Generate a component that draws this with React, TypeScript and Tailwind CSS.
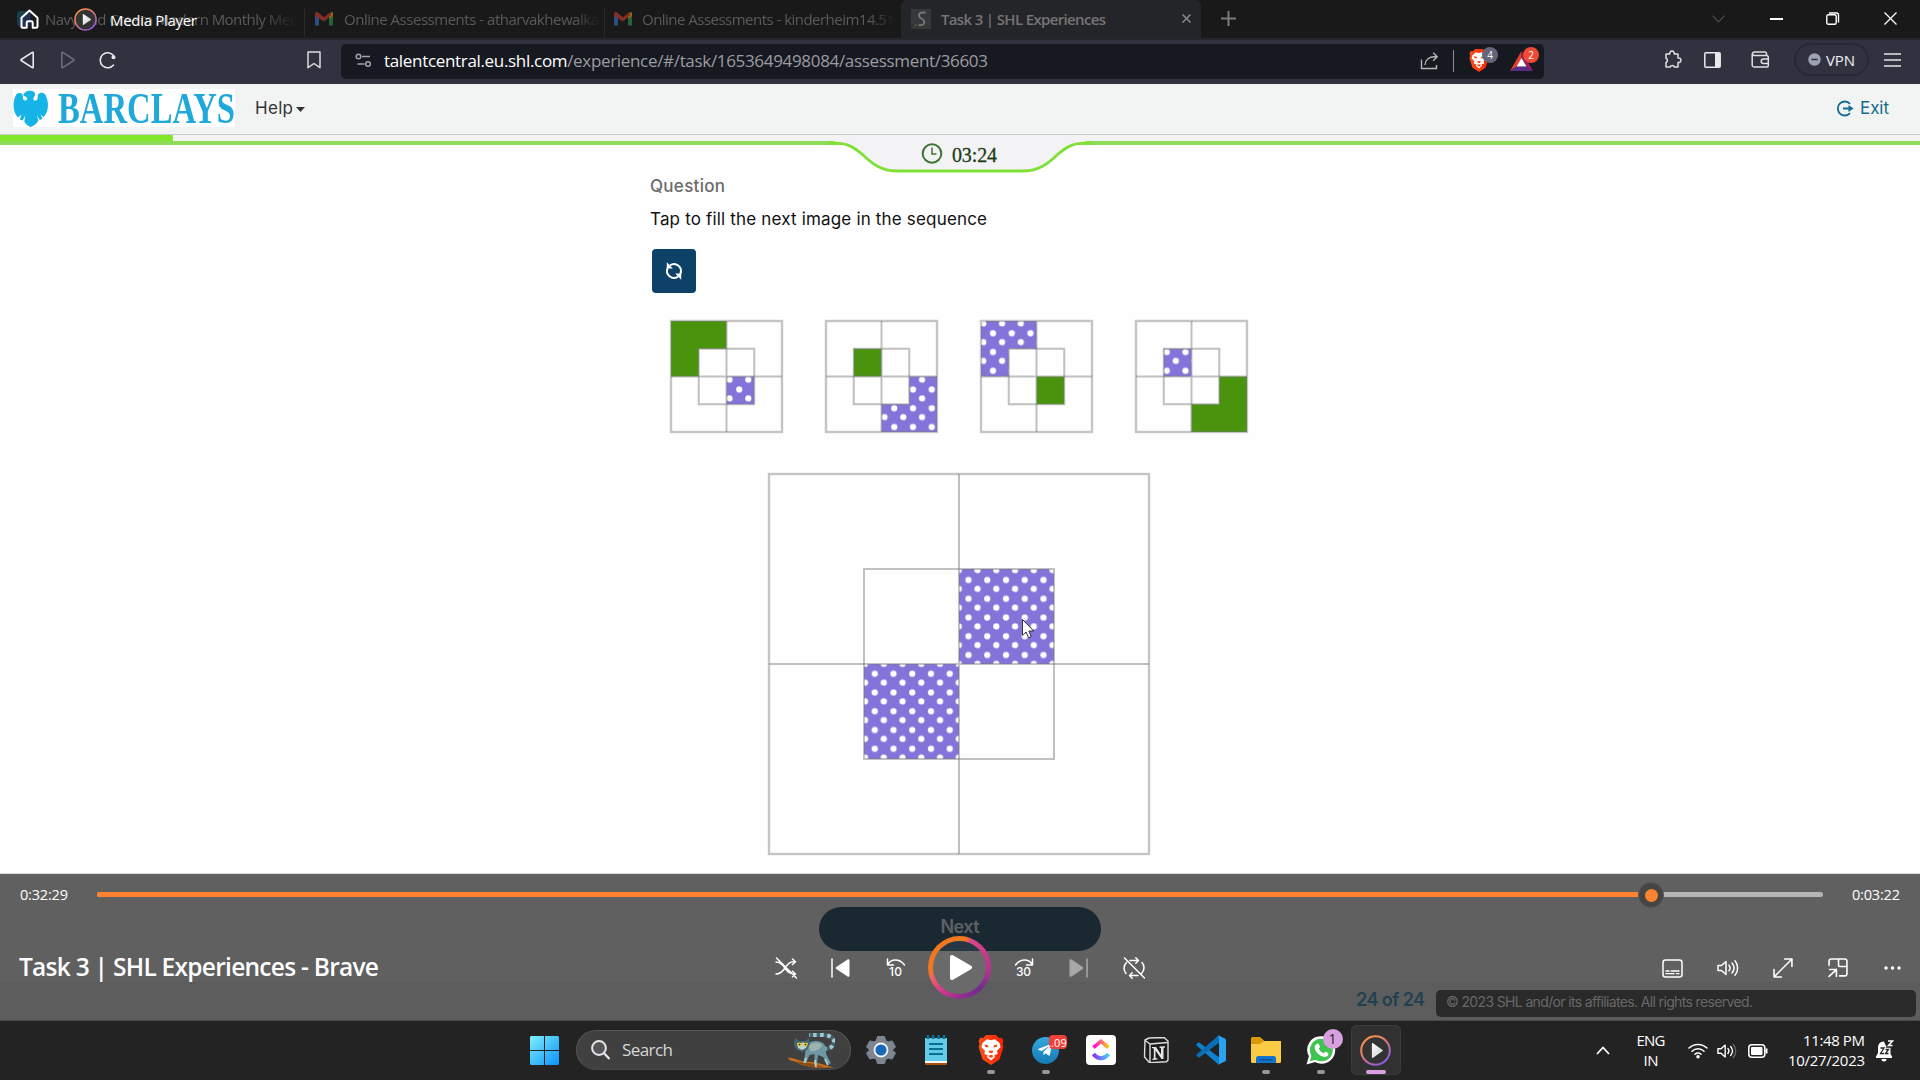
import { useLayoutEffect, useRef, type ReactNode } from "react";
import { FaTelegramPlane } from "react-icons/fa";

/* Text set to a fixed measure: tracking (or horizontal scale) is adjusted to fill it. */
function Fit({ w, text, className = "", stretch = false, children }: { w: number; text?: string; className?: string; stretch?: boolean; children?: ReactNode }) {
  const ref = useRef<HTMLSpanElement>(null);
  useLayoutEffect(() => {
    const el = ref.current;
    if (!el) return;
    const adjust = () => {
      el.style.letterSpacing = "0px";
      el.style.transform = "none";
      const natural = el.getBoundingClientRect().width;
      const n = (el.textContent ?? "").length;
      if (stretch) el.style.transform = `scaleX(${w / natural})`;
      else el.style.letterSpacing = `${(w - natural) / Math.max(1, n - 1)}px`;
    };
    adjust();
    document.fonts?.ready.then(adjust);
  }, [w, stretch]);
  return (
    <span className={`block shrink-0 whitespace-pre ${className}`} style={{ width: w }}>
      <span ref={ref} className="inline-block origin-left">{text ?? children}</span>
    </span>
  );
}

const SEGOE = "font-['Open_Sans','Noto_Sans',sans-serif]";
const NOVA = "font-['Inter','Lato',sans-serif]";

function Gmail() {
  return (
    <svg width="18" height="14" viewBox="0 0 18 14" className="shrink-0 opacity-50">
      <path d="M0 2v11.5h4V6z" fill="#4285f4" />
      <path d="M18 2v11.5h-4V6z" fill="#34a853" />
      <path d="M14 1.5 18 0v4l-4 3z" fill="#fbbc04" />
      <path d="M0 .5 2.5 0 9 5.2 15.5 0 16 3.5 9 9.5 0 4z" fill="#ea4335" />
    </svg>
  );
}

function MediaLogo({ size }: { size: number }) {
  return (
    <svg width={size} height={size} viewBox="0 0 30 30" className="shrink-0">
      <defs>
        <linearGradient id="mp" x1="0" y1="0" x2="0.7" y2="1">
          <stop offset="0" stopColor="#ff9a2e" /><stop offset=".5" stopColor="#e0787a" /><stop offset="1" stopColor="#8a5be0" />
        </linearGradient>
        <linearGradient id="mp2" x1="0" y1="0" x2="1" y2="1"><stop offset="0" stopColor="#fff" /><stop offset="1" stopColor="#ccc" /></linearGradient>
      </defs>
      <circle cx="15" cy="15" r="13.8" fill="#333" stroke="url(#mp)" strokeWidth="2" />
      <path d="M11.5 8.6v12.8a.8.8 0 0 0 1.2.6l9.2-6.4a.8.8 0 0 0 0-1.2L12.7 8a.8.8 0 0 0-1.2.6z" fill="url(#mp2)" />
    </svg>
  );
}

function TitleTabs() {
  return (
    <div className={`relative h-[38px] shrink-0 bg-[#19191a] ${SEGOE} text-[15px] leading-[20px] text-[#5a5a5a]`}>
      <div className="flex h-full items-center pb-[1px]">
        <div className="ml-[17px] h-[16px] w-[14px] shrink-0 rounded bg-linear-to-br from-[#12484a] to-[#221c52]" />
        <div className="ml-[14px] w-[253px] shrink-0 overflow-hidden mask-r-from-85%"><Fit w={253} text="Navy and Cream Modern Monthly Mee" /></div>
        <div className="ml-[6px] h-[28px] w-px shrink-0 self-end bg-[#2b2b2c]" />
        <div className="ml-[10px]"><Gmail /></div>
        <div className="ml-[11px] w-[256px] shrink-0 overflow-hidden mask-r-from-90%"><Fit w={255} text="Online Assessments - atharvakhewalka" /></div>
        <div className="ml-[4px] h-[28px] w-px shrink-0 self-end bg-[#2b2b2c]" />
        <div className="ml-[9px]"><Gmail /></div>
        <div className="ml-[10px] w-[253px] shrink-0 overflow-hidden mask-r-from-90%"><Fit w={253} text="Online Assessments - kinderheim14.51" /></div>
        <div className="ml-[6px] mt-[1px] flex h-[38px] w-[300px] shrink-0 items-center rounded-t-[6px] bg-[#242528] pb-[1px]">
          <div className="ml-[10px] flex size-[20px] items-center justify-center bg-[#36383a]">
            <svg width="12" height="16" viewBox="0 0 12 16" fill="none" stroke="#777" strokeWidth="1.8"><path d="M10.5 1.5H7.5C5.5 1.5 4 2.7 4 4.5s1.2 2.5 2.8 3.3 2.5 1.7 2.5 3.2-1.3 3.2-3.3 3.2H3.5" /><path d="M0 14h1.5" stroke="#3e6b2a" /></svg>
          </div>
          <Fit w={165} text="Task 3 | SHL Experiences" className="ml-[10px] font-semibold text-[#747474]" />
          <svg width="9" height="9" viewBox="0 0 9 9" className="ml-[76px]" stroke="#8a8a8a" strokeWidth="1.5"><path d="M.5.5l8 8M8.5.5l-8 8" /></svg>
        </div>
        <svg width="15" height="15" viewBox="0 0 15 15" className="ml-[20px]" stroke="#7c7c7c" strokeWidth="2"><path d="M7.5 0v15M0 7.5h15" /></svg>
        <svg width="13" height="8" viewBox="0 0 13 8" className="ml-[476px]" fill="none" stroke="#4c4c4c" strokeWidth="1.2"><path d="M.5.7l6 6.3 6-6.3" /></svg>
        <svg width="13" height="2" viewBox="0 0 13 2" className="ml-[45px]"><path d="M0 0h13v2H0z" fill="#fff" /></svg>
        <svg width="14" height="13" viewBox="0 0 14 13" className="ml-[43px]" fill="none" stroke="#fff" strokeWidth="1.4"><rect x=".8" y="2.8" width="9.4" height="9.4" rx="1.5" /><path d="M3 1h7.5a2 2 0 0 1 2 2v7.5" /></svg>
        <svg width="13" height="13" viewBox="0 0 13 13" className="ml-[44px]" stroke="#fff" strokeWidth="1.3"><path d="M.5.5l12 12M12.5.5l-12 12" /></svg>
      </div>
      <div className="absolute inset-y-0 left-[19px] flex items-center text-white">
        <svg width="21" height="20" viewBox="0 0 21 20" fill="none" stroke="#fff" strokeWidth="2" strokeLinejoin="round"><path d="M2.5 8.8 10.5 1.5l8 7.3v8.7a1.3 1.3 0 0 1-1.3 1.3h-3.5v-5.3a1.3 1.3 0 0 0-1.3-1.3H9a1.3 1.3 0 0 0-1.3 1.3v5.3H3.8a1.3 1.3 0 0 1-1.3-1.3z" /></svg>
        <div className="ml-[34px] mt-[1px]"><MediaLogo size={23} /></div>
        <Fit w={87} text="Media Player" className="ml-[13px] mt-[2px]" />
      </div>
    </div>
  );
}

function BraveLion({ size }: { size: number }) {
  return (
    <svg width={size} height={size * 1.15} viewBox="0 0 26 30" className="shrink-0">
      <defs><linearGradient id="br" x1="0" x2="1" y1="0" y2="0"><stop offset="0" stopColor="#f4511e" /><stop offset="1" stopColor="#ff2000" /></linearGradient></defs>
      <path d="M8 0h10l3 3 3-.3 1.5 3.8-1 2 1 3.5-4 12.500L13 30l-8.500-5.500L.5 12l1-3.500-1-2L2 2.700 5 3z" fill="url(#br)" />
      <path d="M13 5.300 9 4.200 4.500 8 3.300 12l3.700 4-.8 3 3.300 1-.5 2L13 25.500 17 22l-.5-2 3.300-1-.8-3 3.700-4L21.500 8 17 4.200z" fill="#fff" />
      <path d="M6.500 9.500l4 1-.3 2-3.200-.7zM19.500 9.500l-4 1 .3 2 3.200-.7zM11.500 15.500h3l1 1.500-2.500 1.500-2.500-1.500zM10 21l3-1.200L16 21l-3 2z" fill="#fb4a1c" />
    </svg>
  );
}

function Toolbar() {
  return (
    <div className={`flex h-[46px] shrink-0 items-center border-t-2 border-[#26272c] bg-[#303240] pb-[5px] ${SEGOE}`}>
      <svg width="16" height="18" viewBox="0 0 16 18" className="ml-[19px]" fill="none" stroke="#e8e8ec" strokeWidth="1.6" strokeLinejoin="round"><path d="M14.2 1.8v14.4c0 .5-.5.7-.9.4L2.200 9.500c-.4-.3-.4-.7 0-1L13.300 1.400c.4-.3.9-.1.9.4z" /></svg>
      <svg width="16" height="18" viewBox="0 0 16 18" className="ml-[25px]" fill="none" stroke="#6c6d78" strokeWidth="1.5" strokeLinejoin="round"><path d="M1.800 1.800v14.400c0 .5.5.7.9.4l11.100-7.100c.4-.3.4-.7 0-1L2.700 1.400c-.4-.3-.9-.1-.9.4z" /></svg>
      <svg width="19" height="18" viewBox="0 0 19 18" className="ml-[22px]" fill="none" stroke="#e8e8ec" strokeWidth="1.6"><path d="M15.500 4.500A7.500 7.500 0 1 0 15.500 14" strokeLinecap="round" /><circle cx="15.500" cy="6.300" r="2" fill="#e8e8ec" stroke="none" /></svg>
      <svg width="14" height="18" viewBox="0 0 14 18" className="ml-[190px]" fill="none" stroke="#dcdce0" strokeWidth="1.5"><path d="M1 1h12v15.700L7 12.500l-6 4.200z" strokeLinejoin="round" /></svg>
      <div className="ml-[20px] mt-[3px] flex h-[35px] w-[1203px] shrink-0 items-center rounded-[5px] bg-[#171921] pb-px">
        <svg width="17" height="15" viewBox="0 0 17 15" className="ml-[14px]" fill="none" stroke="#a2a3a8" strokeWidth="1.5"><circle cx="3.500" cy="3.500" r="2.300" /><path d="M7 3.500h8M2.500 11h7" /><circle cx="13" cy="11" r="2.300" /></svg>
        <Fit w={604} className="ml-[12px] text-[17px] leading-[24px] text-[#9b9ca2]"><span className="text-white">talentcentral.eu.shl.com</span>/experience/#/task/1653649498084/assessment/36603</Fit>
        <svg width="19" height="18" viewBox="0 0 19 18" className="ml-[432px]" fill="none" stroke="#b5b5ba" strokeWidth="1.4"><path d="M1.500 7.500v9h15v-3.500M5 13c.3-5 4-8.200 9.500-8.200h2.500M13.200.8l4 4-4 4" /></svg>
        <div className="ml-[14px] h-[22px] w-px bg-[#8d8d92]" />
        <div className="relative ml-[15px] flex h-[24px] w-[20px] items-center justify-center">
          <BraveLion size={20} />
          <span className="absolute -top-[2px] left-[13px] flex size-[16px] items-center justify-center rounded-full bg-[#63657a] text-[10px] leading-none text-white">4</span>
        </div>
        <div className="relative ml-[21px] h-[20px] w-[23px]">
          <svg width="23" height="20" viewBox="0 0 23 20"><path d="M11.500 0v7L6.500 15.500 0 20z" fill="#e8402a" /><path d="M0 20l6.500-4.500h10L23 20z" fill="#5b2c87" /><path d="M11.500 0 23 20l-6.500-4.500-5-8.500z" fill="#a3195b" /><path d="M11.500 7l5 8.500h-10z" fill="#fff" /></svg>
          <span className="absolute -top-[4px] left-[13px] flex size-[16px] items-center justify-center rounded-full bg-[#ee4a35] text-[10px] leading-none text-white">2</span>
        </div>
      </div>
      <svg width="19" height="19" viewBox="0 0 19 19" className="ml-[119px]" fill="none" stroke="#e0e0e4" strokeWidth="1.5" strokeLinejoin="round"><path d="M3 4h3.800a2.300 2.300 0 1 1 4.400 0H15v4a2.300 2.300 0 1 1 0 4.400V17h-3.600a2.200 2.200 0 0 0-4.200 0H3v-4.500a2.300 2.300 0 0 0 0-4.200z" /></svg>
      <svg width="17" height="16" viewBox="0 0 17 16" className="ml-[22px]"><rect x=".8" y=".8" width="15.400" height="14.400" rx="1" fill="none" stroke="#e8e8ec" strokeWidth="1.5" /><path d="M11 1h5v14h-5z" fill="#e8e8ec" /></svg>
      <svg width="19" height="17" viewBox="0 0 19 17" className="ml-[30px]" fill="none" stroke="#e0e0e4" strokeWidth="1.5"><path d="M15.500 4V2.500a1.500 1.500 0 0 0-1.500-1.500H3a1.800 1.800 0 0 0 0 3.500h12.500A1.800 1.800 0 0 1 17.300 6v8.500a1.500 1.500 0 0 1-1.500 1.500H3a1.800 1.800 0 0 1-1.800-1.500V2.500M17.500 8h-5a2.300 2.300 0 0 0 0 4.600h5" /></svg>
      <div className="ml-[24px] flex h-[33px] w-[75px] shrink-0 items-center rounded-full border-2 border-[#272935]">
        <svg width="13" height="13" viewBox="0 0 13 13" className="ml-[12px] shrink-0"><circle cx="6.500" cy="6.500" r="6.200" fill="#9fa1b5" /><path d="M3.300 6.500h6.400" stroke="#303240" strokeWidth="1.5" /></svg>
        <Fit w={29} text="VPN" className="ml-[5px] text-[15px] leading-[20px] text-[#f0f0f2]" />
      </div>
      <svg width="17" height="14" viewBox="0 0 17 14" className="ml-[15px]" stroke="#e4e4e8" strokeWidth="1.5"><path d="M0 1h17M0 7h17M0 13h17" /></svg>
    </div>
  );
}

function Header() {
  return (
    <div className={`flex h-[51px] shrink-0 items-center border-b border-[#c9cacf] bg-[#f2f4f4] pb-[2px] ${NOVA}`}>
      <div className="ml-[13px] flex h-[38px] w-[222px] shrink-0 items-center bg-white">
        <svg width="36" height="37" viewBox="0 0 36 37" className="shrink-0" fill="#16b3e6">
          <path d="M12 2.500C13.500.3 19 0 21 1.800c1.600 1.500 1.300 4-.3 5.600-.9 1.300-.3 3 1.300 3.200 2.500.2 2.800-2 2.700-4.300 0-1.800 1-2.800 2.600-3.300 1.700-.5 3.400 0 4.700 1.300 2.300 3.300 3.600 9 2.700 14.200-.6 3.600-2 6.300-4.200 8.700l-3-3 2 4.300c-.8.9-1.700 1.300-2.700 1.500L24 25.500l1.300 5.300C23.500 34 20.500 36 17.800 37c-3-1-5.300-3-6.500-5.500l1-6-2.800 5c-1.100 0-2-.5-2.700-1.200l1.700-4.800L5 27.500C2 24.500.5 20 .5 15.500c0-4 1-8.200 3-11.200C4.800 3 6.500 2.700 8 3.300c1.300.6 1.800 1.700 1.900 3.200 0 2 .2 4 2.400 4 1.600 0 2.300-1.300 1.700-2.700-.5-1-1.500-1.500-3.500-1.800 0-1.300.4-2.500 1.500-3.500z" />
        </svg>
        <Fit w={177} stretch text="BARCLAYS" className="ml-[9px] mt-[2px] font-['Liberation_Serif',serif] text-[44px] font-bold leading-[38px] text-[#1fa9db]" />
      </div>
      <Fit w={38} text="Help" className="ml-[20px] text-[17px] leading-[24px] text-[#333]" />
      <svg width="9" height="5" viewBox="0 0 9 5" className="ml-[3px] mt-[3px]"><path d="M0 0h9L4.500 5z" fill="#333" /></svg>
      <div className="ml-auto mr-[31px] flex items-center text-[#146c92]">
        <svg width="18" height="17" viewBox="0 0 18 17" fill="none" stroke="currentColor" strokeWidth="1.8"><path d="M14 3.800A7 7 0 1 0 14 13.200" /><path d="M7 8.500h8" strokeWidth="2" /><path d="M12.500 5v7l5-3.500z" fill="currentColor" stroke="none" /></svg>
        <Fit w={29} text="Exit" className="ml-[6px] text-[17px] leading-[24px]" />
      </div>
    </div>
  );
}

function TimerStrip() {
  return (
    <div className="relative z-10 h-[10px] shrink-0 bg-[#f3f3f6]">
      <div className="h-[6px] w-[173px] bg-[#83e82c]" />
      <div className="h-[4px] bg-[#8edd58]" />
      <div className="absolute left-[820px] top-[5px] h-[33px] w-[280px]">
        <svg width="280" height="33" viewBox="0 0 280 33" className="absolute inset-0">
          <path d="M14 0h252v2.500c-12 0-18 4-26 12.500-11 10-19 16-32 16H76C63 31 55 25 44 15 36 6.500 28 2.500 14 2.500z" fill="#f3f3f6" />
          <path d="M8 3c18-.8 25 3 35 12 10 9.500 19 16 33 16h128c14 0 23-6.500 33-16 10-9 17-12.800 35-12" fill="none" stroke="#80e035" strokeWidth="2.800" />
        </svg>
        <div className="absolute left-[101px] top-[2px] flex items-center">
          <svg width="22" height="22" viewBox="0 0 22 22" fill="none" stroke="#3f7434" strokeWidth="2"><circle cx="11" cy="10.500" r="9.300" /><path d="M11 4.500v6.500h4.500" strokeWidth="1.5" /></svg>
          <Fit w={45} text="03:24" className="ml-[9px] mt-[2px] font-['Liberation_Serif',serif] text-[20px] leading-[22px] text-[#1d3a15] [-webkit-text-stroke:0.3px_#1d3a15]" />
        </div>
      </div>
    </div>
  );
}

type Shape = { d: string; fill: "green" | "dots" };

function Grid({ size, shapes, id }: { size: number; shapes: Shape[]; id: string }) {
  const h = size / 2, q = size / 4;
  return (
    <svg width={size + 4} height={size + 4} viewBox={`-2 -2 ${size + 4} ${size + 4}`} className="-m-px block shrink-0">
      <defs>
        <pattern id={id} width="18.75" height="18.75" patternUnits="userSpaceOnUse">
          <rect width="18.75" height="18.75" fill="#8474da" />
          <circle cx="12" cy="12.3" r="3.1" fill="#fff" />
          <circle cx="2.3" cy="2.4" r="3.1" fill="#fff" /><circle cx="21.05" cy="2.4" r="3.1" fill="#fff" />
          <circle cx="2.3" cy="21.15" r="3.1" fill="#fff" /><circle cx="21.05" cy="21.15" r="3.1" fill="#fff" />
        </pattern>
      </defs>
      {shapes.map((s) => <path key={s.d} d={s.d} fill={s.fill === "green" ? "#4a940d" : `url(#${id})`} />)}
      <g fill="none" stroke="#777" strokeOpacity=".46" strokeWidth="2">
        <rect x="0" y="0" width={size} height={size} strokeWidth="2.4" strokeOpacity=".42" />
        <rect x={q} y={q} width={h} height={h} />
        <path d={`M${h} 0V${size}M0 ${h}H${size}`} />
      </g>
    </svg>
  );
}

const S = 111;
const TL = "M0 0H55.5V27.75H27.75V55.5H0Z";
const BR = "M111 111H55.5V83.25H83.25V55.5H111Z";
const ITL = "M27.75 27.75H55.5V55.5H27.75Z";
const IBR = "M55.5 55.5H83.25V83.25H55.5Z";

const SEQUENCE: Shape[][] = [
  [{ d: TL, fill: "green" }, { d: IBR, fill: "dots" }],
  [{ d: ITL, fill: "green" }, { d: BR, fill: "dots" }],
  [{ d: TL, fill: "dots" }, { d: IBR, fill: "green" }],
  [{ d: ITL, fill: "dots" }, { d: BR, fill: "green" }],
];

function Question() {
  return (
    <div className={`h-[728px] shrink-0 bg-[#fefefe] ${NOVA}`}>
      <div className="ml-[650px] flex w-[620px] flex-col pt-[29px]">
        <Fit w={75} text="Question" className="text-[17px] font-medium leading-[24px] text-[#6b6b6b]" />
        <Fit w={337} text="Tap to fill the next image in the sequence" className="mt-[9px] text-[17px] leading-[24px] text-[#111]" />
        <div className="ml-[2px] mt-[18px] flex size-[44px] items-center justify-center rounded-[4px] bg-[#0e4168]">
          <svg width="20" height="20" viewBox="0 0 20 20" fill="none" stroke="#fff" strokeWidth="2"><path d="M6 4.300A7 7 0 0 1 16.300 13M14 15.700A7 7 0 0 1 3.700 7" /><path d="M2.800 1.300v6.200h6zM17.200 18.700v-6.200h-6z" fill="#fff" stroke="none" /></svg>
        </div>
        <div className="ml-[19.5px] mt-[27px] flex gap-[42px]">
          {SEQUENCE.map((s, i) => <Grid key={i} id={`seq${i}`} size={S} shapes={s} />)}
        </div>
        <div className="relative ml-[118px] mt-[40px] w-[382px]">
          <Grid id="answer" size={380} shapes={[{ d: "M190 95H285V190H190Z", fill: "dots" }, { d: "M95 190H190V285H95Z", fill: "dots" }]} />
          <svg width="13" height="20" viewBox="0 0 13 20" className="absolute left-[254px] top-[146px]"><path d="M.5.5v15.800l3.600-3.300 2.500 5.700 2.600-1.100L6.800 12h5z" fill="#fff" stroke="#111" strokeWidth=".8" /></svg>
        </div>
      </div>
    </div>
  );
}

function PageFooter() {
  return (
    <div className={`flex h-[148px] shrink-0 flex-col border-b border-t border-b-[#484848] border-t-[#dcdcdc] bg-[#606060] ${NOVA}`}>
      <div className="mx-auto mt-[33px] flex h-[44px] w-[282px] shrink-0 justify-center rounded-[22px] bg-[#1a2832]">
        <Fit w={39} text="Next" className="mt-[8px] text-[18px] font-semibold leading-[24px] text-[#5e6162]" />
      </div>
      <div className="mt-auto flex h-[38px] justify-end border-t border-[#5a5a5a] bg-[#5d5d5d]">
        <Fit w={69} text="24 of 24" className="mt-[5px] text-[18px] font-semibold leading-[24px] text-[#1f4150]" />
        <div className="ml-[11px] mr-[4px] mt-[7px] h-[27px] w-[480px] rounded-[5px] bg-[#2a2a2a] pl-[10px]">
          <Fit w={307} text="© 2023 SHL and/or its affiliates. All rights reserved." className="text-[14px] leading-[24px] text-[#686868]" />
        </div>
      </div>
    </div>
  );
}

function Slot({ children, w = "w-[55px]" }: { children: ReactNode; w?: string }) {
  return <div className={`flex shrink-0 items-center justify-center ${w}`}>{children}</div>;
}

const line = { fill: "none", stroke: "#fff", strokeWidth: 1.5, strokeLinecap: "round", strokeLinejoin: "round" } as const;

function PlayerControls() {
  return (
    <div className={`absolute inset-x-0 top-[874px] flex h-[146px] flex-col text-white ${SEGOE}`}>
      <div className="flex h-[41px] items-center">
        <Fit w={48} text="0:32:29" className="ml-[20px] text-[14.5px] leading-[20px]" />
        <div className="relative ml-[29px] flex h-[5px] w-[1726px] rounded-full bg-[#b5b5b5]">
          <div className="h-full w-[1554px] rounded-l-full bg-[#ff8230]" />
          <div className="absolute -top-[10px] left-[1541px] flex size-[26px] items-center justify-center rounded-full border border-[#555] bg-[#454545]"><div className="size-[13px] rounded-full bg-[#ff8230]" /></div>
        </div>
        <Fit w={48} text="0:03:22" className="ml-[29px] text-[14.5px] leading-[20px]" />
      </div>
      <div className="mt-[22px] flex h-[62px] items-center">
        <Fit w={360} text="Task 3 | SHL Experiences - Brave" className="-mt-[2px] ml-[19px] text-[24.5px] font-semibold leading-[30px]" />
        <div className="ml-[379px] flex items-center">
          <Slot><svg width="22" height="22" viewBox="0 0 22 22" {...line}><path d="M1 5c4 0 6 1.500 9 6s5 6 10 6M1 17c4 0 6-1.500 9-6s5-6.500 10-6.500M17.500 2l3 2.700-3 2.800M17.500 14.200l3 2.800-3 2.800M1.500 1l20 20" /></svg></Slot>
          <Slot><svg width="19" height="20" viewBox="0 0 19 20"><path d="M1 1v18" {...line} /><path d="M18.500 2.500v15c0 1.200-1 1.700-2 1L5.300 11c-.8-.6-.8-1.500 0-2L16.500 1.500c1-.7 2-.2 2 1z" fill="#fff" /></svg></Slot>
          <Slot>
            <div className="flex flex-col items-center">
              <svg width="20" height="8" viewBox="0 0 20 8" {...line}><path d="M1.500 1v6h6M1.800 6.500C5 1 13 0 18.500 7" /></svg>
              <Fit w={13} text="10" className="font-['Inter',sans-serif] text-[12px] font-medium leading-[12px]" />
            </div>
          </Slot>
          <Slot w="w-[73px]">
            <div className="-mt-[1px] flex size-[63px] items-center justify-center rounded-full bg-[conic-gradient(from_20deg,#d8478a,#b5318f_22%,#6c2c8c_32%,#9a2c90_45%,#d23c8c_55%,#ec6660_64%,#f07820_68%,#f07820_97%,#e8604a)] p-[5px]">
              <div className="relative flex size-full items-center justify-center overflow-hidden rounded-full bg-[#6a6a6a]">
                <div className="absolute inset-x-0 top-0 h-[10px] bg-[#273642]" />
                <svg width="24" height="27" viewBox="0 0 24 27" className="relative ml-[3px]"><path d="M1 3v21c0 1.800 1.500 2.600 3 1.700l18-10.500c1.500-.9 1.500-2.500 0-3.400L4 1.300C2.500.4 1 1.200 1 3z" fill="#fff" /></svg>
              </div>
            </div>
          </Slot>
          <Slot>
            <div className="flex flex-col items-center">
              <svg width="20" height="8" viewBox="0 0 20 8" {...line}><path d="M18.500 1v6h-6M18.200 6.500C15 1 7 0 1.500 7" /></svg>
              <Fit w={15} text="30" className="font-['Inter',sans-serif] text-[12px] font-medium leading-[12px]" />
            </div>
          </Slot>
          <Slot><svg width="19" height="20" viewBox="0 0 19 20" className="opacity-45"><path d="M18 1v18" {...line} /><path d="M.5 2.500v15c0 1.200 1 1.700 2 1L13.700 11c.8-.6.8-1.500 0-2L2.500 1.500c-1-.7-2-.2-2 1z" fill="#fff" /></svg></Slot>
          <Slot><svg width="22" height="22" viewBox="0 0 22 22" {...line}><path d="M7 3.500h8M12.800.8l2.700 2.700-2.700 2.700M15 18.500H7M9.200 15.800l-2.700 2.700 2.700 2.700M3.500 5.500a8 8 0 0 0-.5 11M18.500 16.500a8 8 0 0 0 .5-11M1.500 1l20 20" /></svg></Slot>
        </div>
        <div className="ml-auto flex">
          <Slot><svg width="21" height="19" viewBox="0 0 21 19" {...line}><rect x="1" y="1" width="19" height="17" rx="2.5" /><path d="M4 12h3M9 12h8M4 14.700h8M14.500 14.700H17" strokeWidth="1.3" /></svg></Slot>
          <Slot><svg width="22" height="18" viewBox="0 0 22 18" {...line}><path d="M1 6.500v5h3.500l4.500 4V2.500l-4.500 4zM12 6.200c1.300 1.700 1.300 4 0 5.600M15 4c2.500 3 2.500 7 0 10M18 1.800c3.500 4.200 3.500 10.200 0 14.400" /></svg></Slot>
          <Slot><svg width="20" height="20" viewBox="0 0 19 19" {...line}><path d="M11 1h7v7M8 18H1v-7M18 1 1 18" /></svg></Slot>
          <Slot><svg width="20" height="20" viewBox="0 0 19 19" {...line}><path d="M1 7V3a2 2 0 0 1 2-2h13a2 2 0 0 1 2 2v12a2 2 0 0 1-2 2h-5M10 1v6a1 1 0 0 0 1 1h7M1.500 11H8v6.500M8 11l-7 6.500" /></svg></Slot>
          <Slot><svg width="17" height="4" viewBox="0 0 17 4" fill="#fff"><circle cx="2" cy="2" r="1.7" /><circle cx="8.500" cy="2" r="1.7" /><circle cx="15" cy="2" r="1.7" /></svg></Slot>
        </div>
      </div>
    </div>
  );
}

function DockApp({ children, running, active }: { children: ReactNode; running?: boolean; active?: boolean }) {
  return (
    <div className="relative flex h-[59px] w-[55px] shrink-0 items-center justify-center pb-px">
      {active && <div className="absolute left-[3px] top-[4px] h-[50px] w-[50px] rounded-[5px] border border-[#3b3b3b] bg-[#313131]" />}
      <div className="relative flex size-[30px] items-center justify-center">{children}</div>
      {running && <div className="absolute left-[24px] top-[49px] h-[4px] w-[8px] rounded-full bg-[#979797]" />}
      {active && <div className="absolute left-[18px] top-[49px] h-[4px] w-[20px] rounded-full bg-[#d9a0e0]" />}
    </div>
  );
}

function Lemur() {
  return (
    <svg width="48" height="35" viewBox="0 0 48 35" className="shrink-0">
      <path d="M1 25c4-1 8 2 14 3l14 1.500 18 5-17 .3c-9-1-16-3-20-5.300C6 28 2 27.500 1 25z" fill="#c9701a" />
      <path d="M5 28l20 2.500 12 3.500-12 .5z" fill="#8d4a12" />
      <path d="M36 15c6 2 10-1 11-6 0-5-6-7-12-7-5 0-9 0-13 0" fill="none" stroke="#3f6470" strokeWidth="4" />
      <path d="M36 15c6 2 10-1 11-6 0-5-6-7-12-7-5 0-9 0-13 0" fill="none" stroke="#a5c8cc" strokeWidth="4" strokeDasharray="3.5 3.5" />
      <path d="M19 12c5-5 14-5 18-1 3 4 1 8 3 12l4 7-2 1-6-7-5-2-1 9h-2.500l0-10-5 1-3.500 8h-2.500l2-12z" fill="#6b98a3" />
      <path d="M22 12c5-3 10-3 13 0-2 5-7 7-12 6z" fill="#9db1ad" />
      <path d="M8 5l4 3h6l4-3 1 6-3 6-5 2-5-2-3-5z" fill="#44646f" />
      <path d="M10 10h5l1-1 1 1h4l-2 5-4 2-4-2z" fill="#b9d3d4" />
      <circle cx="12.5" cy="11.5" r="2" fill="#f2c318" /><circle cx="18.5" cy="11.5" r="2" fill="#f2c318" />
      <circle cx="12.5" cy="11.5" r=".8" fill="#222" /><circle cx="18.5" cy="11.5" r=".8" fill="#222" />
      <path d="M19 25l-1.500 5M28 27l1 7M38 26l3 6" stroke="#a9cdd2" strokeWidth="2" />
    </svg>
  );
}

function Taskbar() {
  return (
    <div className={`flex h-[59px] shrink-0 items-center bg-[#232323] ${SEGOE} text-white`}>
      <svg width="29" height="29" viewBox="0 0 29 29" className="ml-[530px] shrink-0">
        <defs><linearGradient id="win" x1="0" y1="0" x2="29" y2="29" gradientUnits="userSpaceOnUse"><stop offset="0" stopColor="#7df3fb" /><stop offset=".5" stopColor="#46bffb" /><stop offset="1" stopColor="#0a93fb" /></linearGradient></defs>
        <path d="M1 0h13v14H0V1zM15 0h13l1 1v13H15zM0 15h14v14H1l-1-1zM15 15h14v13l-1 1H15z" fill="url(#win)" />
      </svg>
      <div className="-mt-px ml-[17px] flex h-[40px] w-[275px] shrink-0 items-center rounded-full border border-[#555] border-b-[#484848] bg-[#404040]">
        <svg width="19" height="20" viewBox="0 0 19 20" className="ml-[14px] shrink-0" fill="none" stroke="#e4e6ea" strokeWidth="2" strokeLinecap="round"><circle cx="8" cy="8" r="6.9" fill="#565656" /><path d="M13 13.300l4.800 5" strokeWidth="2.3" /></svg>
        <Fit w={51} text="Search" className="ml-[12px] text-[17px] leading-[24px] text-[#d6d6d6]" />
        <div className="ml-[114px]"><Lemur /></div>
      </div>
      <div className="ml-[2px] flex">
        <DockApp>
          <svg width="30" height="30" viewBox="0 0 30 30"><path d="M11.500 1.500h7l1.200 4 2.500 1.400 4-1 3.300 6-3 3v.2l3 3-3.300 6-4-1-2.500 1.400-1.200 4h-7l-1.200-4-2.500-1.400-4 1-3.300-6 3-3v-.2l-3-3 3.300-6 4 1 2.500-1.400z" fill="#7d8590" stroke="#7d8590" strokeLinejoin="round" /><circle cx="15" cy="15" r="6.5" fill="#1668b8" stroke="#f5f5f5" strokeWidth="1.8" /></svg>
        </DockApp>
        <DockApp>
          <svg width="22" height="30" viewBox="0 0 22 30"><path d="M0 3h22v24H0z" fill="#63cbe8" /><path d="M0 26h22v2H0z" fill="#f4f8fa" /><path d="M0 28h22v1.200a1 1 0 0 1-1 .8H1a1 1 0 0 1-1-.8z" fill="#a9500f" /><path d="M3 0v4M8 0v4M13.500 0v4M19 0v4" stroke="#0d6f94" strokeWidth="2.5" /><path d="M4 9h14M4 14h14M4 19h14" stroke="#0a6d94" strokeWidth="1.8" /></svg>
        </DockApp>
        <DockApp running><BraveLion size={26} /></DockApp>
        <DockApp running>
          <div className="flex size-[27px] items-center justify-center rounded-full bg-linear-to-b from-[#34a9df] to-[#1579b4]"><FaTelegramPlane size={16} className="-ml-[2px]" /></div>
          <span className="absolute left-[18px] top-0 flex h-[14px] w-[18px] items-center justify-center rounded-[4px] bg-[#f0413a] text-[11px] leading-none">..09</span>
        </DockApp>
        <DockApp>
          <svg width="30" height="30" viewBox="0 0 30 30"><defs><linearGradient id="cu1" x1="0" x2="1"><stop offset="0" stopColor="#ff02f0" /><stop offset="1" stopColor="#ffc800" /></linearGradient><linearGradient id="cu2" x1="0" x2="1"><stop offset="0" stopColor="#8930fd" /><stop offset="1" stopColor="#49ccf9" /></linearGradient></defs><rect width="30" height="30" rx="4" fill="#fff" /><path d="M7.500 12.500 15 6.300l7.500 6.200" fill="none" stroke="url(#cu1)" strokeWidth="3.600" /><path d="M7.500 19c4 5.500 11 5.500 15 0" fill="none" stroke="url(#cu2)" strokeWidth="4" /></svg>
        </DockApp>
        <DockApp>
          <svg width="26" height="26" viewBox="0 0 26 26"><path d="M2 3l4-2 15-.5L25 4v19l-1.500 1.700-17 1L1.500 20z" fill="#1c1c1c" stroke="#dedede" strokeWidth="1.4" /><path d="M1.800 3.200 7 7v18M7 7l17.500-1.500" stroke="#dedede" strokeWidth="1.4" fill="none" /><path d="M9 10h4l5 7.500V11l-1.500-.3V9.500L22 9.300v1.200l-1.500.5V22h-2l-6-8.500V21l2 .5v1L9.300 23v-1l1.500-.8v-9.700L9 11z" fill="#e6e6e6" /></svg>
        </DockApp>
        <DockApp>
          <svg width="30" height="30" viewBox="0 0 30 30"><path d="M.7 9 3 7.300l20 15V30L.8 10.700C.2 10 .2 9.500.7 9z" fill="#0f7fcf" /><path d="M.7 21 3 22.700l20-15V0L.8 19.300c-.6.7-.6 1.200-.1 1.700z" fill="#0a6db5" /><path d="M22 .2 29 3.500c.6.4 1 .9 1 1.600v19.800c0 .7-.4 1.200-1 1.600l-7 3.300c-.6 0 1-1 1-2V2.200z" fill="#2aa2f0" /></svg>
        </DockApp>
        <DockApp running>
          <svg width="30" height="26" viewBox="0 0 30 26"><path d="M0 1.500A1.500 1.500 0 0 1 1.500 0H9l4 3.500V9H0z" fill="#d99a0a" /><path d="M0 7h9l4-3h17v20.500a1.500 1.500 0 0 1-1.500 1.500h-27A1.500 1.500 0 0 1 0 24.500z" fill="#fccb45" /><path d="M5 26v-4.500A2.500 2.500 0 0 1 7.500 19h15a2.500 2.500 0 0 1 2.500 2.500V26z" fill="#1173c9" /><path d="M8.500 22.700h13" stroke="#0b4f90" strokeWidth="1.2" /></svg>
        </DockApp>
        <DockApp running>
          <svg width="31" height="31" viewBox="0 0 31 31"><path d="M16 .8a14 14 0 0 1 0 28.400c-2.500 0-4.500-.5-6.500-1.700L.5 30 3 21.500A14 14 0 0 1 16 .8z" fill="#fff" /><path d="M16 3.300a11.700 11.700 0 0 1 0 23.400c-2.200 0-4.200-.5-6-1.700L4 26.500l1.600-5.700A11.700 11.700 0 0 1 16 3.300z" fill="#3fc351" /><path d="M11.500 8.500c.8-.4 1.500-.2 1.900.6l1 2.500c.2.7-1 1.500-1.200 2 1 2.200 2.700 3.700 5 4.600.6-.2 1.300-1.700 2-1.500l2.600 1.300c.7.4.4 1.700 0 2.500-1 1.600-3 2-4.800 1.500-4-1-7.300-4-8.700-7.500-.8-2.300-.3-4.800 2.200-6z" fill="#fff" /></svg>
          <span className="absolute -top-[6px] left-[17px] flex size-[20px] items-center justify-center rounded-full bg-[#d9a0e0] text-[14px] leading-none text-[#222]">1</span>
        </DockApp>
        <DockApp active><MediaLogo size={31} /></DockApp>
      </div>
      <svg width="14" height="9" viewBox="0 0 14 9" className="ml-[193px]" fill="none" stroke="#fff" strokeWidth="1.8"><path d="M1 8l6-6.500L13 8" /></svg>
      <div className="-mt-px ml-[24px] flex w-[34px] flex-col items-center text-[15px] leading-[20px]"><Fit w={29} text="ENG" /><Fit w={15} text="IN" /></div>
      <svg width="20" height="18" viewBox="0 0 20 18" className="-mt-[2px] ml-[20px]" {...line}><path d="M1 7a13 13 0 0 1 18 0M4 10.200a8.500 8.500 0 0 1 12 0M7 13.300a4.300 4.300 0 0 1 6 0" /><circle cx="10" cy="15.7" r="1" fill="#fff" /></svg>
      <svg width="20" height="18" viewBox="0 0 22 18" className="ml-[9px]" {...line}><path d="M1 6.500v5h3.500l4.500 4V2.500l-4.500 4zM12 6.200c1.300 1.700 1.300 4 0 5.600M15 4c2.500 3 2.500 7 0 10" /><path d="M18 1.800c3.500 4.200 3.500 10.200 0 14.400" stroke="#666" /></svg>
      <svg width="20" height="14" viewBox="0 0 20 14" className="ml-[11px]"><rect x=".8" y=".8" width="16" height="12.4" rx="3" fill="none" stroke="#fff" strokeWidth="1.5" /><rect x="3" y="3" width="11.5" height="8" rx="1" fill="#fff" /><path d="M18.500 4.500v5" stroke="#fff" strokeWidth="2" /></svg>
      <div className="-mt-[2px] ml-auto flex w-[80px] flex-col items-end text-[15px] leading-[20px]"><Fit w={62} text="11:48 PM" /><Fit w={77} text="10/27/2023" /></div>
      <svg width="18" height="22" viewBox="0 0 18 22" className="ml-[11px] mr-[26px]"><path d="M8 1.500c-4 0-6 2.800-6 6V13L0 16.500V18h16v-1.500L14.500 14V6H10z" fill="#fff" /><path d="M5.500 19a2.500 2.500 0 0 0 5 0z" fill="#fff" /><path d="M11.500 0h6l-4.500 6h4.500" fill="none" stroke="#232323" strokeWidth="3.500" /><path d="M12 1h4.500L12.500 5.500h4" fill="none" stroke="#fff" strokeWidth="1.500" /><path d="M4.500 8h3.500l-3.500 5.500h3.500M9.500 9.500h3l-3 4h3" fill="none" stroke="#232323" strokeWidth="1.300" /></svg>
    </div>
  );
}

export default function App() {
  return (
    <div className="relative flex h-[1080px] w-[1920px] flex-col overflow-hidden bg-[#fefefe]">
      <TitleTabs />
      <Toolbar />
      <Header />
      <TimerStrip />
      <Question />
      <PageFooter />
      <Taskbar />
      <PlayerControls />
    </div>
  );
}
